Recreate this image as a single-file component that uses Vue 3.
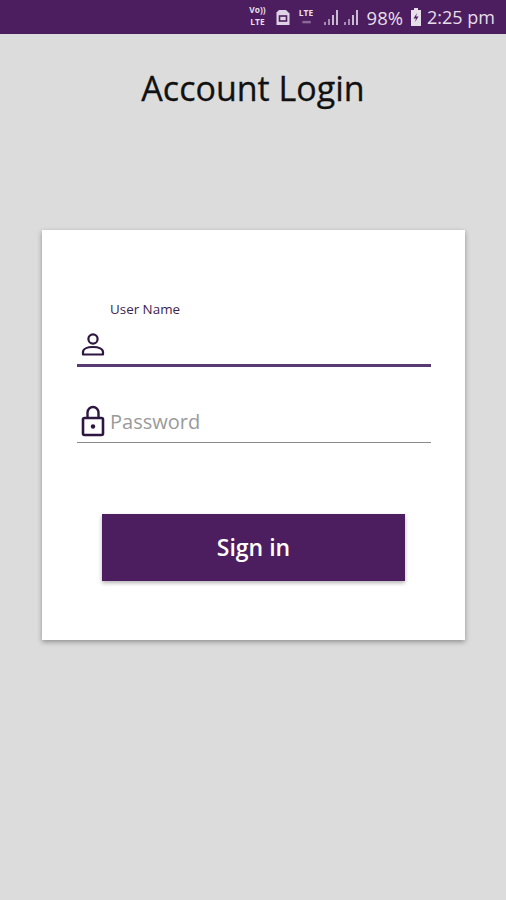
<template>
  <div class="screen">
    <div class="status-bar">
      <span class="volte">
        <span>Vo))</span>
        <span>LTE</span>
      </span>
      <svg class="sim" width="16" height="17" viewBox="0 0 15 17">
        <path d="M3.500 1h7l3.500 3.500V16H1V3.500z" fill="#ddd3e4" />
        <rect x="4" y="7" width="7" height="5" fill="none" stroke="#4d1e5f" stroke-width="1.600" />
      </svg>
      <span class="lte">
        <span>LTE</span>
        <i></i>
      </span>
      <span class="signal">
        <i v-for="h in bars" :key="'a' + h" :style="{ height: h + 'px' }"></i>
      </span>
      <span class="signal second">
        <i v-for="h in bars" :key="'b' + h" :style="{ height: h + 'px' }"></i>
      </span>
      <span class="percent">98%</span>
      <svg class="battery" width="12" height="18" viewBox="0 0 12 18">
        <path d="M4 0h4v2h3v16H1V2h3z" fill="#e6dfea" />
        <path d="M7 5L3.500 10.500H6L5 14l3.500-5.500H6z" fill="#4d1e5f" />
      </svg>
      <span class="clock">2:25 pm</span>
    </div>

    <h1 class="title">Account Login</h1>

    <form class="card" @submit.prevent>
      <div class="field active">
        <label class="float-label" for="username">User Name</label>
        <svg class="icon user" width="26" height="26" viewBox="0 0 26 26">
          <circle cx="13" cy="8" r="4.600" fill="none" stroke="#2d1640" stroke-width="2.200" />
          <path d="M3 23.500v-2.500c0-3 4-5 10-5s10 2 10 5v2.500z" fill="none" stroke="#2d1640" stroke-width="2.200" stroke-linejoin="round" />
        </svg>
        <input id="username" v-model="username" type="text" />
      </div>

      <div class="field">
        <svg class="icon lock" width="26" height="32" viewBox="0 0 26 32">
          <path d="M7.500 13V7.500a5.500 5.500 0 0 1 11 0V13" fill="none" stroke="#2d1640" stroke-width="2.400" />
          <rect x="3" y="13" width="20" height="17" rx="1.500" fill="none" stroke="#2d1640" stroke-width="2.600" />
          <circle cx="13" cy="21.500" r="2.200" fill="#2d1640" />
        </svg>
        <input v-model="password" type="password" placeholder="Password" />
      </div>

      <button class="sign-in" type="submit">Sign in</button>
    </form>
  </div>
</template>

<script setup>
import { ref } from 'vue'

const username = ref('')
const password = ref('')
const bars = [3, 6, 10, 15]
</script>

<style>
html,
body {
  margin: 0;
  background: #dcdcdc;
}
</style>

<style scoped>
.screen {
  height: 900px;
  background: #dcdcdc;
  display: flex;
  flex-direction: column;
  font-family: "Open Sans", sans-serif;
  overflow: hidden;
}

.status-bar {
  height: 34px;
  box-sizing: border-box;
  background: #4d1e5f;
  color: #e6dfea;
  display: flex;
  align-items: center;
  justify-content: flex-end;
  padding: 0 11px 0 0;
}

.volte,
.lte {
  display: flex;
  flex-direction: column;
  font-size: 7px;
  line-height: 10px;
  font-weight: 700;
  text-align: center;
  transform: scale(1.2);
}

.volte {
  width: 19px;
  margin-right: 8px;
}

.sim {
  margin-right: 6px;
}

.lte {
  width: 18px;
  margin-right: 9px;
  margin-top: -4px;
}

.lte i {
  display: block;
  width: 7px;
  height: 2px;
  margin: 1px auto 0;
  background: #8b6a9a;
}

.signal {
  display: flex;
  align-items: flex-end;
  gap: 2px;
  height: 15px;
  margin-right: 6px;
}

.signal.second {
  margin-right: 9px;
}

.signal i {
  width: 2px;
  background: #c9bbd2;
}

.signal i:nth-child(-n + 2) {
  background: #a48cb2;
}

.percent {
  font-size: 18.500px;
  margin: 0 7px 0 0;
}

.battery {
  margin-right: 5px;
}

.clock {
  font-size: 18px;
}

.title {
  margin: 30px 0 0;
  height: 48px;
  line-height: 48px;
  font-size: 34px;
  font-weight: 500;
  text-align: center;
  color: #111;
  -webkit-text-stroke: 0.3px #111;
}

.card {
  margin: 118px 41px 0 42px;
  height: 410px;
  box-sizing: border-box;
  padding: 70px 34px 0 35px;
  background: #fff;
  box-shadow: 0 2px 5px rgba(0, 0, 0, 0.35);
  display: flex;
  flex-direction: column;
}

.field {
  position: relative;
  height: 38px;
  display: flex;
  align-items: flex-end;
  gap: 4px;
  border-bottom: 1px solid #8a8a8a;
  margin-bottom: 37px;
}

.field.active {
  height: 34px;
  margin-top: 30px;
  border-bottom: 3px solid #5b3a73;
}

.float-label {
  position: absolute;
  left: 33px;
  top: -30px;
  font-size: 13.400px;
  line-height: 18px;
  color: #3c2350;
}

.icon {
  flex: none;
  margin-left: 3px;
}

.icon.user {
  margin-bottom: 7px;
}

.icon.lock {
  margin-bottom: 5px;
}

input {
  flex: 1;
  min-width: 0;
  height: 34px;
  padding: 0;
  margin-bottom: 4px;
  border: none;
  outline: none;
  background: transparent;
  font-family: inherit;
  font-size: 20px;
  color: #333;
}

input::placeholder {
  color: #9a9a9a;
}

.sign-in {
  width: 303px;
  height: 67px;
  margin: 34px 0 0 25px;
  padding: 0 0 2px;
  border: none;
  background: #4d1e5f;
  color: #fff;
  font-family: inherit;
  font-size: 23px;
  font-weight: 600;
  box-shadow: 0 2px 4px rgba(0, 0, 0, 0.3);
}
</style>
